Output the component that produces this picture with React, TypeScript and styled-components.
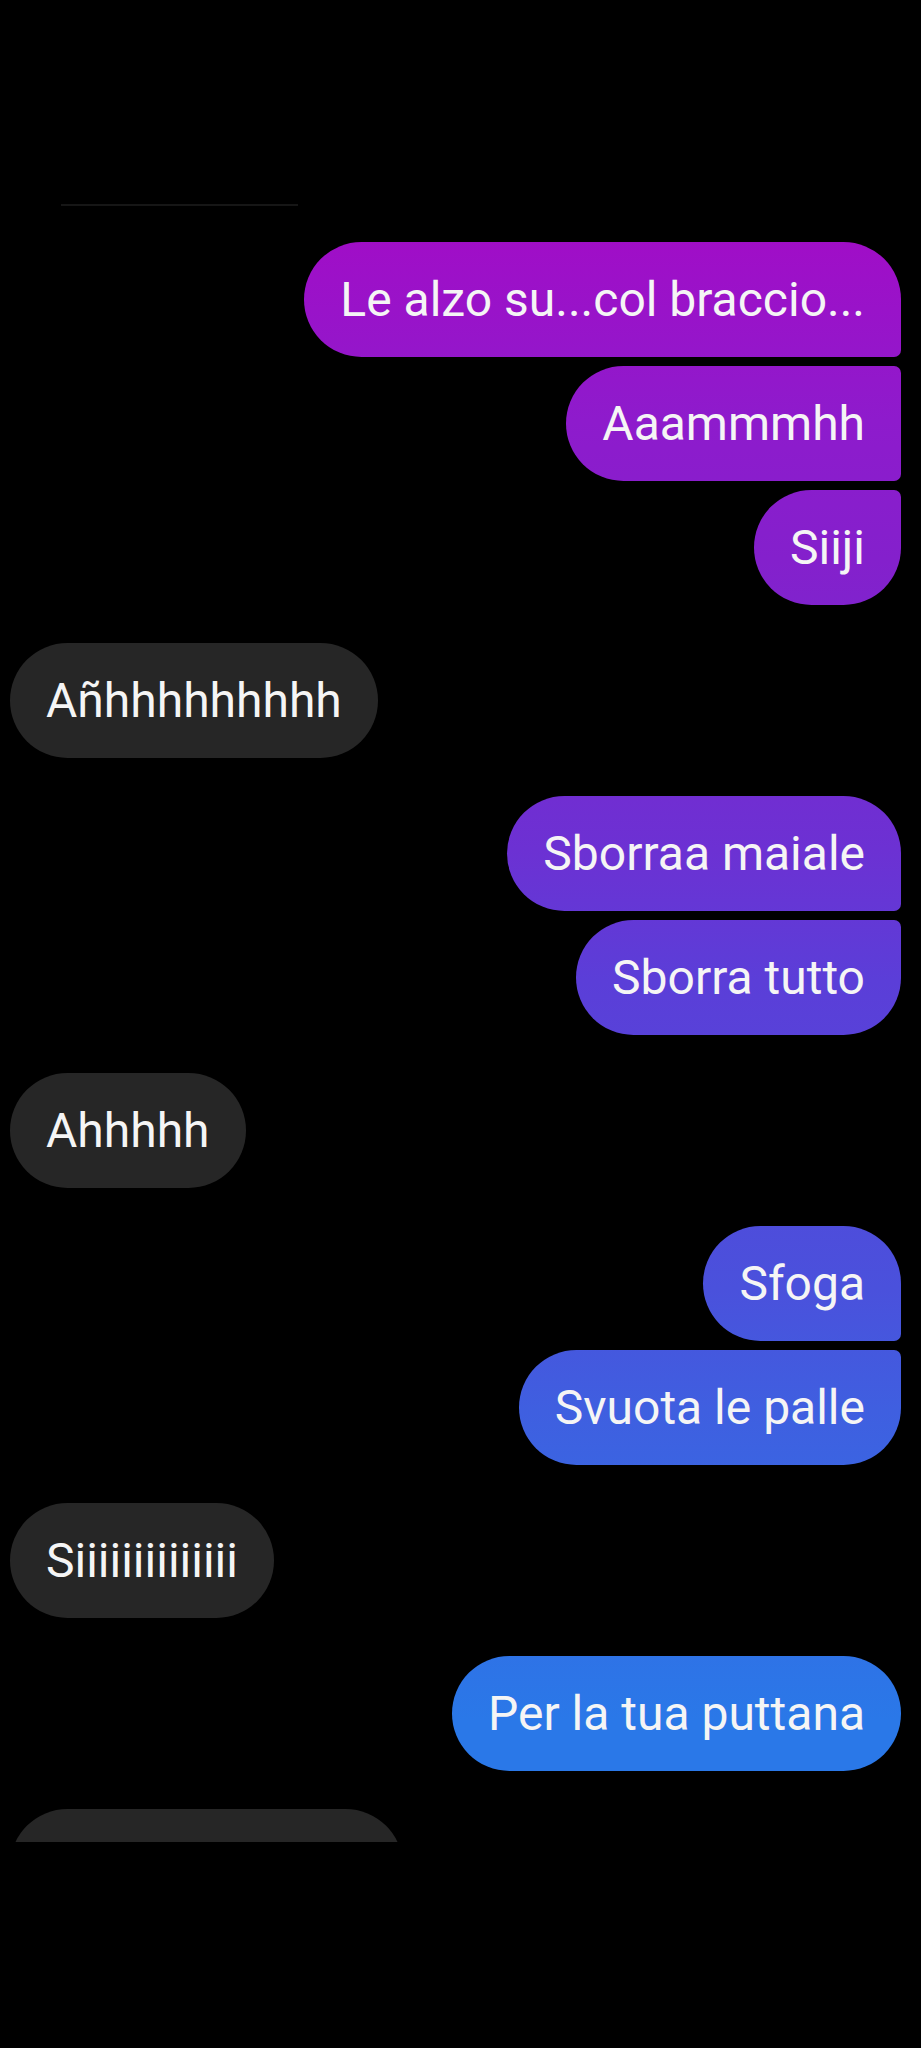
import React from "react";
import styled, { createGlobalStyle, css } from "styled-components";

const GlobalStyle = createGlobalStyle`
  html, body {
    margin: 0;
    padding: 0;
    background: #000;
  }
  body {
    font-family: Roboto, "Noto Sans", "Liberation Sans", sans-serif;
    -webkit-font-smoothing: antialiased;
  }
`;

type Side = "in" | "out";
type Pos = "single" | "first" | "middle" | "last";

interface Group {
  side: Side;
  messages: string[];
}

const groups: Group[] = [
  { side: "out", messages: ["Le alzo su...col braccio...", "Aaammmhh", "Siiji"] },
  { side: "in", messages: ["Añhhhhhhhhh"] },
  { side: "out", messages: ["Sborraa maiale", "Sborra tutto"] },
  { side: "in", messages: ["Ahhhhh"] },
  { side: "out", messages: ["Sfoga", "Svuota le palle"] },
  { side: "in", messages: ["Siiiiiiiiiiiiii"] },
  { side: "out", messages: ["Per la tua puttana"] },
  { side: "in", messages: ["\u00a0".repeat(27)] },
];

const Page = styled.div`
  min-height: 2048px;
  background: #000;
`;

const Viewport = styled.div`
  height: 1842px;
  overflow: hidden;
  box-sizing: border-box;
  padding-top: 204px;
`;

const TopRule = styled.div`
  margin-left: 61px;
  width: 237px;
  height: 2px;
  background: #161616;
`;

const MessageList = styled.div`
  display: flex;
  flex-direction: column;
  gap: 38px;
  padding: 36px 20px 0 10px;
`;

const GroupBox = styled.div<{ $side: Side }>`
  display: flex;
  flex-direction: column;
  gap: 9px;
  align-items: ${(p) => (p.$side === "out" ? "flex-end" : "flex-start")};
`;

const BIG = "58px";
const SMALL = "7px";

const radiusFor = (side: Side, pos: Pos) => {
  if (side === "in" || pos === "single") return css`border-radius: ${BIG};`;
  const tr = pos === "first" ? BIG : SMALL;
  const br = pos === "last" ? BIG : SMALL;
  return css`border-radius: ${BIG} ${tr} ${br} ${BIG};`;
};

const Bubble = styled.div<{ $side: Side; $pos: Pos }>`
  box-sizing: border-box;
  height: 115px;
  padding: 30px 36px 29px;
  font-size: 48px;
  line-height: 56px;
  color: #f5f5f5;
  white-space: pre;
  ${(p) => radiusFor(p.$side, p.$pos)}
  ${(p) =>
    p.$side === "out"
      ? css`
          background-image: linear-gradient(
            180deg,
            #a30bc6 0px,
            #a00ec7 240px,
            #8e1bcc 420px,
            #8420cc 560px,
            #6c31d3 850px,
            #5b3ed8 980px,
            #4a51dc 1290px,
            #3f5fe0 1410px,
            #2a78e8 1720px,
            #2a78e8 2048px
          );
          background-attachment: fixed;
          background-size: 100% 2048px;
        `
      : css`
          background: #262626;
        `}
`;

const posOf = (i: number, n: number): Pos =>
  n === 1 ? "single" : i === 0 ? "first" : i === n - 1 ? "last" : "middle";

export default function App() {
  return (
    <Page>
      <GlobalStyle />
      <Viewport>
        <TopRule />
        <MessageList>
          {groups.map((g, gi) => (
            <GroupBox key={gi} $side={g.side}>
              {g.messages.map((m, i) => (
                <Bubble key={i} $side={g.side} $pos={posOf(i, g.messages.length)}>
                  {m}
                </Bubble>
              ))}
            </GroupBox>
          ))}
        </MessageList>
      </Viewport>
    </Page>
  );
}
